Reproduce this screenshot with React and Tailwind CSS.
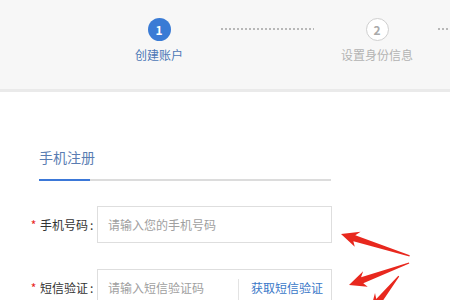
import React from "react";

const font = { fontFamily: '"Noto Sans CJK SC", "Noto Sans", sans-serif' };

const Dots = () => (
    <div className="shrink-0 w-[93px] h-[2px] mt-[10px] bg-[repeating-linear-gradient(90deg,#b8b8b8_0px,#b8b8b8_2px,transparent_2px,transparent_4px)]" />
);

const Step = ({ num, label, active }) => (
    <div className="shrink-0 w-[80px] flex flex-col items-center">
        <div
            className={
                active
                    ? "w-[23px] h-[23px] rounded-full bg-[#3a7bd5] text-white text-[12px] font-bold flex items-center justify-center"
                    : "w-[23px] h-[23px] rounded-full border border-[#cfcfcf] bg-white text-[#aaa] text-[12px] font-bold flex items-center justify-center"
            }
        >
            {num}
        </div>
        <div
            className={
                active
                    ? "mt-[6px] text-[12px] leading-[16px] text-[#4c78b6] whitespace-nowrap"
                    : "mt-[6px] text-[12px] leading-[16px] text-[#b3b3b3] whitespace-nowrap"
            }
        >
            {label}
        </div>
    </div>
);

const Arrow = ({ x, y, angle, len }) => (
    <polygon
        transform={`translate(${x} ${y}) rotate(${angle})`}
        points={`0,0 18,-8 14,-3.2 ${len},-0.6 ${len},0.6 14,3.2 17,8`}
        fill="#e8281e"
    />
);

const Label = ({ text }) => (
    <div className="shrink-0 w-[70px] flex items-center text-[12px] text-[#333] whitespace-nowrap">
        <span className="text-[#e8281e] w-[13px] text-center">*</span>
        <span>{text}</span>
        <span className="ml-[2px]">:</span>
    </div>
);

export default function App() {
    return (
        <div className="relative w-[450px] h-[300px] overflow-hidden bg-white" style={font}>
            <div className="h-[92px] bg-[#f7f7f7] border-b-[3px] border-[#eaeaea]">
                <div className="flex items-start pl-[119px] pt-[18px]">
                    <Step num="1" label="创建账户" active />
                    <div className="shrink-0 ml-[22px]"><Dots /></div>
                    <div className="shrink-0 ml-[23px]"><Step num="2" label="设置身份信息" /></div>
                    <div className="shrink-0 ml-[21px]"><Dots /></div>
                </div>
            </div>

            <div className="pl-[27px] pt-[55px]">
                <div className="ml-[12px] w-[292px] border-b-2 border-[#dcdcdc]">
                    <div className="w-[51px] pb-[12px] -mb-[2px] border-b-2 border-[#3b78d8] text-[14px] leading-[20px] text-[#5a7db2] whitespace-nowrap">
                        手机注册
                    </div>
                </div>

                <div className="mt-[25px] flex items-center">
                    <Label text="手机号码" />
                    <div className="w-[235px] h-[37px] border border-[#dedede] flex items-center pl-[10px] text-[12px] text-[#a0a0a0]">
                        请输入您的手机号码
                    </div>
                </div>

                <div className="mt-[26px] flex items-start">
                    <div className="h-[37px] flex items-center"><Label text="短信验证" /></div>
                    <div className="w-[235px] h-[37px] border border-[#dedede] flex items-center text-[12px]">
                        <div className="w-[140px] pl-[10px] text-[#a0a0a0] whitespace-nowrap">请输入短信验证码</div>
                        <div className="self-end w-px h-[26px] bg-[#e3e3e3]" />
                        <div className="flex-1 text-right pr-[8px] text-[#3a78c8] whitespace-nowrap">获取短信验证</div>
                    </div>
                </div>
            </div>

            <svg className="absolute left-[330px] top-[215px]" width="120" height="85" viewBox="0 0 120 85">
                <Arrow x={11} y={19} angle={17.7} len={72} />
                <Arrow x={19} y={70} angle={-20.1} len={64} />
                <Arrow x={40} y={97} angle={-51.3} len={46} />
            </svg>
        </div>
    );
}
